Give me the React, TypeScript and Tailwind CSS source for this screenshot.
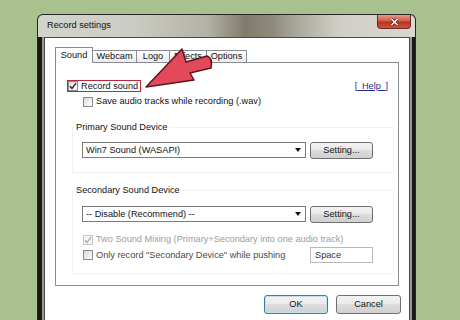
function CheckBox({ checked, disabled }: { checked?: boolean; disabled?: boolean }) {
  return (
    <span
      className={`flex h-[10px] w-[10px] shrink-0 items-center justify-center border ${
        disabled ? 'border-[#c6c6c6] bg-[#f5f5f5]' : 'border-[#8b8b8b] bg-[linear-gradient(135deg,#d9d9d9,#ffffff)]'
      }`}
    >
      {checked && (
        <svg width="8" height="8" viewBox="0 0 8 8">
          <path d="M1 4.2 L3 6.4 L7 1.2" fill="none" stroke={disabled ? '#a9a9a9' : '#1f1f1f'} strokeWidth="1.3" />
        </svg>
      )}
    </span>
  );
}

function Dropdown({ value }: { value: string }) {
  return (
    <div className="flex h-[16px] w-[224px] items-center justify-between border border-[#7b7b7b] bg-white pl-[3px] pr-[4px]">
      <span>{value}</span>
      <svg width="6" height="4" viewBox="0 0 6 4">
        <path d="M0 0 H6 L3 4 Z" fill="#111" />
      </svg>
    </div>
  );
}

function WinButton({ label, width, isDefault }: { label: string; width: string; isDefault?: boolean }) {
  return (
    <button
      className={`flex items-center justify-center rounded-[3px] border bg-[linear-gradient(#f3f3f3,#ebebeb_45%,#dddddd_50%,#cfcfcf)] ${width} ${
        isDefault ? 'border-[#3a7f9f] shadow-[inset_0_0_0_1px_#bde3f2]' : 'border-[#707070]'
      }`}
    >
      {label}
    </button>
  );
}

export default function App() {
  const tabs = [
    { name: 'Sound', width: 'w-[38px]', active: true },
    { name: 'Webcam', width: 'w-[45px]', active: false },
    { name: 'Logo', width: 'w-[34px]', active: false },
    { name: 'Effects', width: 'w-[38px]', active: false },
    { name: 'Options', width: 'w-[41px]', active: false },
  ];

  return (
    <div className="relative h-[320px] w-[460px] overflow-hidden whitespace-nowrap bg-[#a9c18e] pl-[37px] pt-[14px] font-['Liberation_Sans',Arial,sans-serif] text-[9.2px] leading-[11px] text-[#111]">
      {/* dialog window */}
      <div className="flex h-[306px] w-[379px] flex-col rounded-t-[6px] border border-b-0 border-[#262626] bg-[#181818]">
        <div className="flex h-[22px] items-start justify-between rounded-t-[5px] bg-[linear-gradient(90deg,#d3d4cc_0%,#cbccc3_25%,#b3b2a6_45%,#7f7b6c_55%,#8d8a7c_62%,#a8a699_68%,#cfcfc7_80%,#d8d8d0_100%)]">
          <span className="pl-[9px] pt-[5px] text-[#111]">Record settings</span>
          <div className="mr-[4px] flex h-[14px] w-[34px] items-center justify-center rounded-b-[4px] border border-t-0 border-[#6b2b22] bg-[linear-gradient(#e79a8a,#d25a45_45%,#b8321f_55%,#c9553f)]">
            <svg width="9" height="8" viewBox="0 0 9 8">
              <path d="M1.5 1 L7.5 7 M7.5 1 L1.5 7" stroke="#4a1510" strokeWidth="2.8" />
              <path d="M1.5 1 L7.5 7 M7.5 1 L1.5 7" stroke="#ffffff" strokeWidth="1.6" />
            </svg>
          </div>
        </div>

        <div className="flex flex-1 pl-[6px] pr-[5px]">
          <div className="flex-1 border border-b-0 border-[#4a4a46] bg-white px-[10px] pt-[9px] shadow-[-2px_0_0_#9a9a94,2px_0_0_#9a9a94]">
            {/* tabs */}
            <div className="flex h-[15px] items-end">
              {tabs.map((tab) => (
                <div
                  key={tab.name}
                  className={`flex items-center justify-center border border-b-0 border-[#898c95] ${tab.width} ${
                    tab.active
                      ? 'relative z-10 -mb-px h-[16px] bg-white'
                      : '-ml-px h-[12px] bg-[linear-gradient(#ffffff,#ececec)]'
                  }`}
                >
                  {tab.name}
                </div>
              ))}
            </div>

            {/* tab panel */}
            <div className="h-[224px] border border-[#898c95] bg-white">
              <div className="mt-[17px] flex items-center justify-between">
                <div className="ml-[11px] flex h-[12px] w-[74px] items-center border border-[#b8283a]">
                  <CheckBox checked />
                  <span className="ml-[3px]">Record sound</span>
                </div>
                <span className="mr-[10px] text-[#1f2a8c] underline">[{'\u2002'}Help{'\u2002'}]</span>
              </div>

              <div className="ml-[27px] mt-[4px] flex h-[11px] items-center gap-[3px]">
                <CheckBox />
                <span>Save audio tracks while recording (.wav)</span>
              </div>

              <fieldset className="ml-[16px] mr-[4px] mt-[15px] border border-[#f1f1f1] pb-[13px]">
                <legend className="ml-[1px] px-[2px] leading-[11px]">Primary Sound Device</legend>
                <div className="ml-[9px] mt-[9px] flex gap-[4px]">
                  <Dropdown value="Win7 Sound (WASAPI)" />
                  <WinButton label="Setting..." width="w-[63px] h-[17px]" />
                </div>
              </fieldset>

              <fieldset className="ml-[16px] mr-[4px] mt-[12px] border border-[#f1f1f1] pb-[10px]">
                <legend className="ml-[1px] px-[2px] leading-[11px]">Secondary Sound Device</legend>
                <div className="ml-[9px] mt-[10px] flex gap-[4px]">
                  <Dropdown value="-- Disable (Recommend) --" />
                  <WinButton label="Setting..." width="w-[63px] h-[17px]" />
                </div>
                <div className="ml-[10px] mt-[11px] flex h-[11px] items-center gap-[3px] text-[#9c9c9c]">
                  <CheckBox checked disabled />
                  <span>Two Sound Mixing (Primary+Secondary into one audio track)</span>
                </div>
                <div className="mt-[2px] flex h-[16px] items-center">
                  <div className="ml-[10px] flex w-[227px] items-center gap-[3px] text-[#4a4a4a]">
                    <CheckBox />
                    <span>Only record "Secondary Device" while pushing</span>
                  </div>
                  <div className="flex h-[16px] w-[63px] items-center border border-[#b9b9b9] pl-[4px] text-[#333]">Space</div>
                </div>
              </fieldset>
            </div>

            <div className="-mr-[2px] mt-[9px] flex justify-end gap-[8px]">
              <WinButton label="OK" width="w-[64px] h-[19px]" isDefault />
              <WinButton label="Cancel" width="w-[65px] h-[19px]" />
            </div>
          </div>
        </div>
      </div>

      {/* red pointer overlay */}
      <svg className="pointer-events-none absolute left-0 top-0" width="460" height="320" viewBox="0 0 460 320">
        <path
          d="M146 87 L182 49 L186 62 L207 56 Q213 58 211 68 L190 73 L194 80 Z"
          fill="#e24a5c"
          stroke="#5e1419"
          strokeWidth="1.5"
          strokeLinejoin="round"
        />
      </svg>
    </div>
  );
}
